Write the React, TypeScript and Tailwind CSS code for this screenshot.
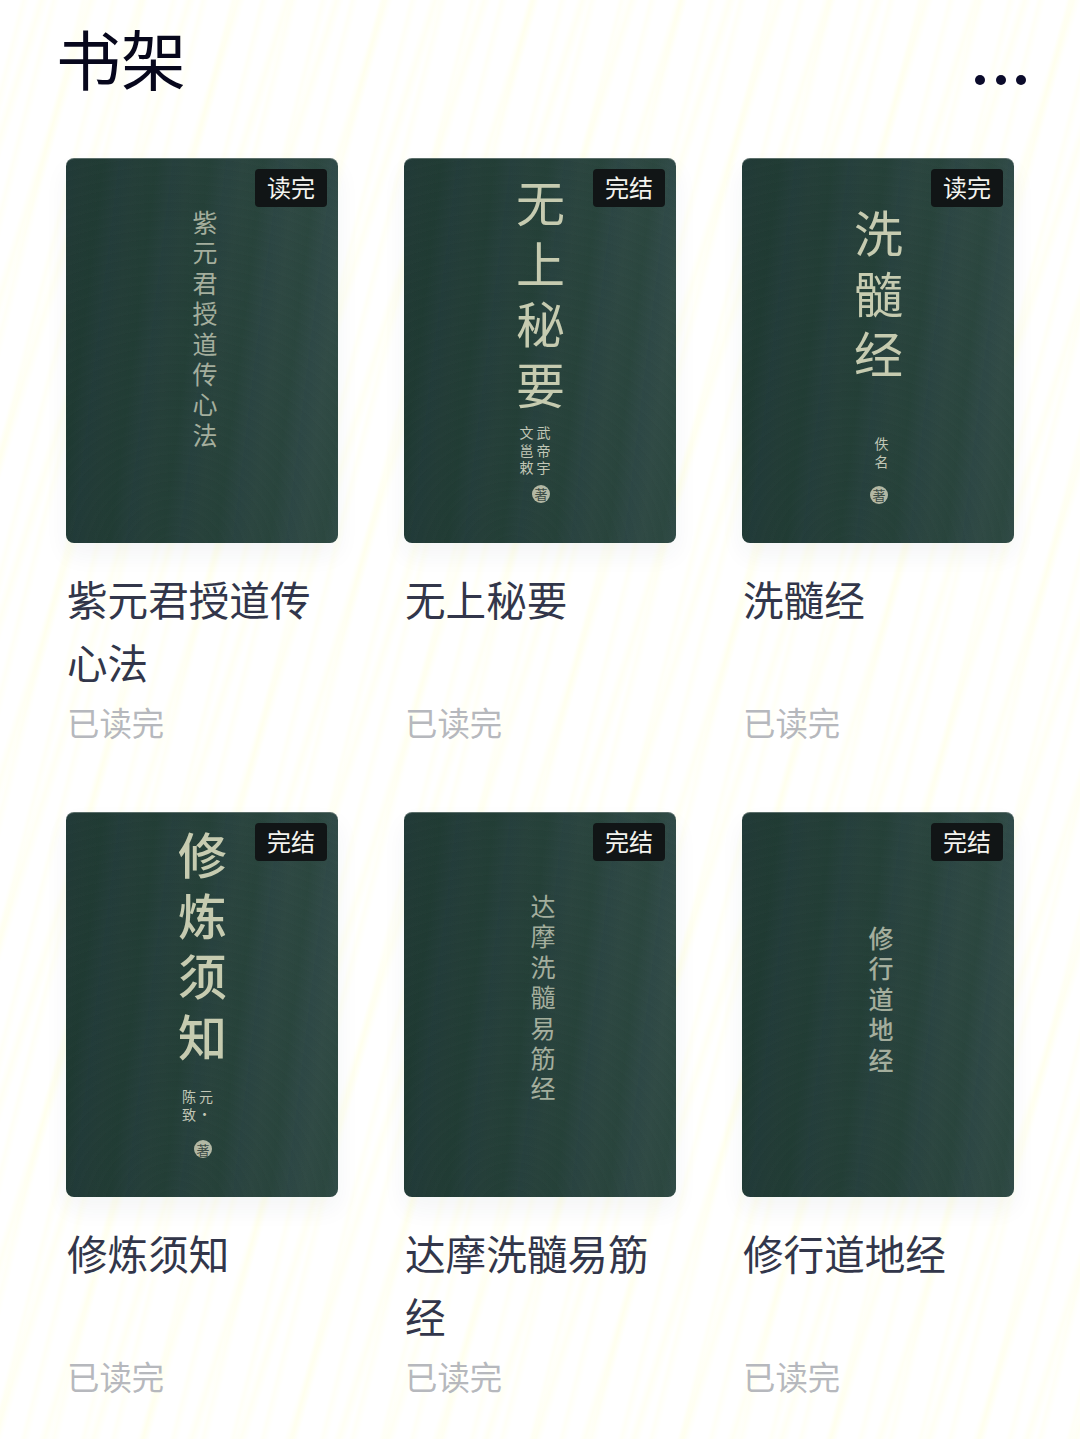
const BOOKS = [
  {
    name: "紫元君授道传心法",
    badge: "读完",
    cover: "紫元君授道传心法",
    coverClass: "pt-[51px] pl-[6px] text-[25px] tracking-[5.4px] leading-[30px] text-[#a4ae9d]",
    author: null,
  },
  {
    name: "无上秘要",
    badge: "完结",
    cover: "无上秘要",
    coverClass: "pt-[20px] text-[49px] tracking-[11.5px] leading-[60px] text-[#c6cbb0]",
    author: { lines: ["武帝宇", "文邕敕"], className: "pt-[5px] ml-[-11px]", sealClass: "ml-[13px] mt-[6px]" },
  },
  {
    name: "洗髓经",
    badge: "读完",
    cover: "洗髓经",
    coverClass: "pt-[50px] text-[49px] tracking-[11.5px] leading-[60px] text-[#c6cbb0]",
    author: { lines: ["佚名"], className: "pt-[46px] ml-[6px]", sealClass: "ml-[-4px] mt-[14px]" },
  },
  {
    name: "修炼须知",
    badge: "完结",
    cover: "修炼须知",
    coverClass: "pt-[18px] text-[49px] tracking-[11.5px] leading-[60px] font-medium text-[#c6cbb0]",
    author: { lines: ["元·", "陈致"], className: "pt-[17px] ml-[-10px]", sealClass: "ml-[12px] mt-[15px]" },
  },
  {
    name: "达摩洗髓易筋经",
    badge: "完结",
    cover: "达摩洗髓易筋经",
    coverClass: "pt-[81px] pl-[6px] text-[25px] tracking-[5.4px] leading-[30px] text-[#a4ae9d]",
    author: null,
  },
  {
    name: "修行道地经",
    badge: "完结",
    cover: "修行道地经",
    coverClass: "pt-[113px] pl-[6px] text-[25px] tracking-[5.4px] leading-[30px] font-medium text-[#a4ae9d]",
    author: null,
  },
];

function Cover({ book }: { book: (typeof BOOKS)[number] }) {
  return (
    <div className="relative h-[385px] overflow-hidden rounded-lg border-t border-[#5c6f6b] bg-[repeating-radial-gradient(circle_at_40%_105%,rgba(255,255,255,0.008)_0px,rgba(255,255,255,0)_5px,rgba(0,0,0,0.012)_9px),repeating-linear-gradient(97deg,rgba(32,58,78,0.14)_0px,rgba(32,58,78,0)_17px,rgba(20,55,36,0.18)_37px,rgba(40,66,84,0.08)_53px),linear-gradient(90deg,#213a35_0%,#28423c_50%,#324c47_100%)] shadow-[0_12px_24px_rgba(40,50,70,0.05)]">
      <span className="absolute right-[11px] top-[10px] flex h-[38px] w-[72px] items-center justify-center rounded bg-[#111516] pb-[2px] text-[24px] text-[#f4f4ef]">
        {book.badge}
      </span>
      <div className="flex h-full flex-col items-center">
        <div className={`[writing-mode:vertical-rl] ${book.coverClass}`}>{book.cover}</div>
        {book.author && (
          <div className={`flex flex-col items-center ${book.author.className}`}>
            <div className="text-[14px] leading-[17px] tracking-[3.5px] text-[#c2c7b6] [writing-mode:vertical-rl]">
              {book.author.lines.map((line) => (
                <div key={line}>{line}</div>
              ))}
            </div>
            <span className={`flex h-[18px] w-[18px] items-center justify-center rounded-full bg-[#b3b8a4] text-[13px] leading-none text-[#3a4a44] ${book.author.sealClass}`}>
              著
            </span>
          </div>
        )}
      </div>
    </div>
  );
}

export default function App() {
  return (
    <div
      className="h-[1439px] w-full overflow-hidden bg-white bg-[repeating-linear-gradient(107deg,rgba(255,255,220,0)_0px,rgba(255,255,220,0)_34px,rgba(255,255,215,0.28)_40px,rgba(255,255,220,0)_47px),repeating-linear-gradient(104deg,rgba(255,255,220,0)_0px,rgba(255,255,220,0)_19px,rgba(255,255,215,0.22)_23px,rgba(255,255,220,0)_29px)] font-['Noto_Sans_CJK_SC','Noto_Sans',sans-serif]"
    >
      <header className="flex h-[158px] items-start justify-between pl-[56px] pr-[54px]">
        <h1 className="mt-[17px] text-[65px] leading-[80px] text-[#07071c]">书架</h1>
        <div className="mt-[75px] flex gap-[10.5px]">
          <span className="h-[10px] w-[10px] rounded-full bg-[#0b0b2b]" />
          <span className="h-[10px] w-[10px] rounded-full bg-[#0b0b2b]" />
          <span className="h-[10px] w-[10px] rounded-full bg-[#0b0b2b]" />
        </div>
      </header>
      <main className="grid grid-cols-3 gap-x-[66px] gap-y-[63px] px-[66px]">
        {BOOKS.map((book) => (
          <article key={book.name}>
            <Cover book={book} />
            <h2 className="mt-[24px] min-h-[128px] pl-[1px] text-[40.6px] leading-[63px] text-[#32364a]">
              {book.name}
            </h2>
            <p className="pl-[1px] text-[32.4px] leading-[54px] text-[#b6b8bd]">已读完</p>
          </article>
        ))}
      </main>
    </div>
  );
}
